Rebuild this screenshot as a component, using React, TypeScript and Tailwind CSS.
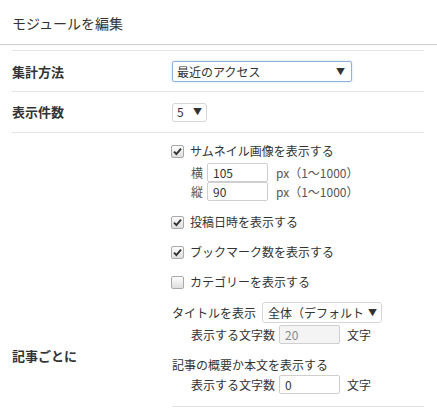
import type { ReactNode } from "react";

const font = { fontFamily: '"Noto Sans CJK JP", "Noto Sans", sans-serif' };

function Check({ checked, children }: { checked?: boolean; children: ReactNode }) {
  return (
    <div className="flex items-center h-[18px]">
      <span className="w-[13px] h-[13px] ml-[-1px] mr-[6px] rounded-[2px] border border-[#a9a9a9] bg-gradient-to-b from-[#fdfdfd] to-[#dedede] flex items-center justify-center shrink-0">
        {checked && (
          <svg width="9" height="9" viewBox="0 0 9 9">
            <path d="M1 4.6 L3.4 7 L8 1.6" fill="none" stroke="#333" strokeWidth="1.9" />
          </svg>
        )}
      </span>
      <span>{children}</span>
    </div>
  );
}

function Field({ value, disabled }: { value: string; disabled?: boolean }) {
  return (
    <span
      className={`inline-flex items-center w-[61px] h-[19px] px-[5px] border border-[#cfcfcf] rounded-[2px] text-[12px] ${
        disabled ? "bg-[#f4f4f4] text-[#888]" : "bg-white text-[#333]"
      }`}
    >
      {value}
    </span>
  );
}

export default function App() {
  return (
    <div className="w-[437px] h-[410px] overflow-hidden bg-white text-[#333]" style={font}>
      <div className="h-[45px] px-3 flex items-center border-b border-[#cdcdcd]">
        <h2 className="text-[14px] pt-[2px]">モジュールを編集</h2>
      </div>

      <div className="pl-3 pr-[13px] pt-[5px]">
        <div className="grid grid-cols-[160px_1fr] h-[41px] border-t border-[#e3e3e3] items-center">
          <div className="text-[13px] font-semibold pt-[1px]">集計方法</div>
          <div className="flex items-center justify-between w-[180px] h-[21px] pl-[4px] pr-[6px] border border-[#8fb1dd] rounded-[2px] shadow-[0_0_2px_#bcd1ee] text-[12px] mt-[1px]">
            <span>最近のアクセス</span>
            <span className="text-[9px]">▼</span>
          </div>
        </div>

        <div className="grid grid-cols-[160px_1fr] h-[41px] border-t border-[#e3e3e3] items-center">
          <div className="text-[13px] font-semibold">表示件数</div>
          <div className="flex items-center justify-between w-[35px] h-[19px] pl-[4px] pr-[4px] border border-[#d6d6d6] rounded-[3px] text-[12px]">
            <span>5</span>
            <span className="text-[9px]">▼</span>
          </div>
        </div>

        <div className="grid grid-cols-[160px_1fr] border-t border-[#e3e3e3] items-center">
          <div className="text-[13px] font-semibold">記事ごとに</div>
          <div className="text-[12px] pt-[9px]">
            <Check checked>サムネイル画像を表示する</Check>
            <div className="pl-[19px] mt-[3px] flex flex-col">
              <div className="flex items-center gap-[4px]">
                <span className="text-[#555]">横</span>
                <Field value="105" />
                <span className="ml-[4px] text-[#555]">px（1～1000）</span>
              </div>
              <div className="flex items-center gap-[4px]">
                <span className="text-[#555]">縦</span>
                <Field value="90" />
                <span className="ml-[4px] text-[#555]">px（1～1000）</span>
              </div>
            </div>
            <div className="mt-[12px] flex flex-col gap-[12px]">
              <Check checked>投稿日時を表示する</Check>
              <Check checked>ブックマーク数を表示する</Check>
              <Check>カテゴリーを表示する</Check>
            </div>

            <div className="mt-[11px] flex items-center gap-[6px]">
              <span>タイトルを表示</span>
              <div className="flex items-center justify-between w-[120px] h-[21px] pl-[5px] pr-[4px] border border-[#d6d6d6] rounded-[3px]">
                <span className="whitespace-nowrap">全体（デフォルト</span>
                <span className="text-[9px]">▼</span>
              </div>
            </div>
            <div className="pl-[19px] mt-[2px] flex items-center gap-[4px]">
              <span>表示する文字数</span>
              <Field value="20" disabled />
              <span className="ml-[3px]">文字</span>
            </div>

            <div className="mt-[12px]">記事の概要か本文を表示する</div>
            <div className="pl-[19px] mt-[1px] flex items-center gap-[4px]">
              <span>表示する文字数</span>
              <Field value="0" />
              <span className="ml-[3px]">文字</span>
            </div>

            <div className="mt-[12px] border-t border-[#e3e3e3]" />
            <div className="h-[172px]" />
          </div>
        </div>
      </div>
    </div>
  );
}
